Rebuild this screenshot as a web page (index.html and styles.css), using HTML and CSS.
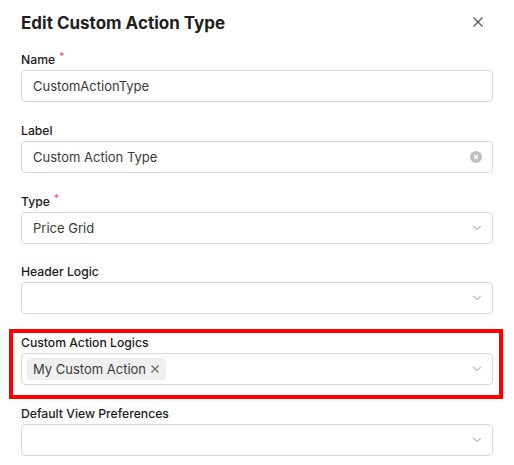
FILE: index.html
```html
<!DOCTYPE html>
<html>
<head>
<meta charset="utf-8">
<link rel="stylesheet" href="styles.css">
</head>
<body>
<div class="modal">
  <div class="header">
    <h1 class="title">Edit Custom Action Type</h1>
    <button class="close" aria-label="Close">
      <svg width="12" height="12" viewBox="0 0 12 12"><path d="M1.5 1.5 L10.5 10.5 M10.5 1.5 L1.5 10.5" stroke="#595959" stroke-width="1.3" fill="none"/></svg>
    </button>
  </div>

  <div class="field">
    <div class="label">Name<span class="req">*</span></div>
    <div class="input"><span class="value">CustomActionType</span></div>
  </div>

  <div class="field">
    <div class="label">Label</div>
    <div class="input"><span class="value">Custom Action Type</span>
      <svg class="suffix" width="12" height="12" viewBox="0 0 12 12"><circle cx="6" cy="6" r="6" fill="#bfbfbf"/><path d="M4 4 L8 8 M8 4 L4 8" stroke="#fff" stroke-width="1.3"/></svg>
    </div>
  </div>

  <div class="field">
    <div class="label">Type<span class="req">*</span></div>
    <div class="input"><span class="value">Price Grid</span>
      <svg class="suffix" width="10" height="6" viewBox="0 0 10 6"><path d="M1 1 L5 4.5 L9 1" stroke="#bfbfbf" stroke-width="1.2" fill="none"/></svg>
    </div>
  </div>

  <div class="field">
    <div class="label">Header Logic</div>
    <div class="input"><span class="value"></span>
      <svg class="suffix" width="10" height="6" viewBox="0 0 10 6"><path d="M1 1 L5 4.5 L9 1" stroke="#bfbfbf" stroke-width="1.2" fill="none"/></svg>
    </div>
  </div>

  <div class="field highlight">
    <div class="label">Custom Action Logics</div>
    <div class="input multi">
      <span class="tag">My Custom Action
        <svg class="tag-x" width="10" height="10" viewBox="0 0 10 10"><path d="M1.5 1.5 L8.5 8.5 M8.5 1.5 L1.5 8.5" stroke="#666" stroke-width="1.1" fill="none"/></svg>
      </span>
      <svg class="suffix" width="10" height="6" viewBox="0 0 10 6"><path d="M1 1 L5 4.5 L9 1" stroke="#bfbfbf" stroke-width="1.2" fill="none"/></svg>
    </div>
  </div>

  <div class="field">
    <div class="label">Default View Preferences</div>
    <div class="input"><span class="value"></span>
      <svg class="suffix" width="10" height="6" viewBox="0 0 10 6"><path d="M1 1 L5 4.5 L9 1" stroke="#bfbfbf" stroke-width="1.2" fill="none"/></svg>
    </div>
  </div>
</div>
</body>
</html>
```

FILE: styles.css
```css
* { box-sizing: border-box; }
html, body { margin: 0; padding: 0; background: #fff; }
body {
  font-family: Inter, "Noto Sans", sans-serif;
  color: #1f1f1f;
  width: 514px;
  height: 465px;
  overflow: hidden;
}
.modal {
  padding: 10.5px 21px 0 21px;
}
.header {
  display: flex;
  align-items: center;
  justify-content: space-between;
  margin-bottom: 15.5px;
}
.title {
  margin: 0;
  font-size: 17px;
  line-height: 24px;
  font-weight: 700;
  color: #1f1f1f;
}
.close {
  border: 0;
  background: none;
  padding: 0;
  margin-right: 9px;
  width: 12px;
  height: 12px;
  display: flex;
  align-items: center;
  justify-content: center;
  margin-top: -1px;
}
.field {
  margin-bottom: 18.8px;
}
.label {
  font-size: 12.2px;
  line-height: 20px;
  font-weight: 500;
  color: #1a1a1a;
}
.req {
  color: #ff4d6d;
  font-size: 10px;
  margin-left: 4px;
  vertical-align: 4px;
  line-height: 0;
}
.input {
  height: 32px;
  border: 1px solid #d9d9d9;
  border-radius: 4px;
  display: flex;
  align-items: center;
  padding: 0 10px 0 11px;
  font-size: 13px;
  color: #3a3a3a;
}
.value { flex: 1; }
.suffix { flex: none; margin-right: 0; }
.input.multi { padding-left: 5px; }
.tag {
  display: inline-flex;
  align-items: center;
  height: 22px;
  padding: 0 5px 0 5px;
  background: #f0f0f0;
  border: 1px solid #ececec;
  border-radius: 4px;
  color: #3a3a3a;
  font-size: 13px;
  margin-right: auto;
}
.tag-x { margin-left: 4px; }
.highlight { position: relative; }
.highlight::after {
  content: "";
  position: absolute;
  left: -12px;
  right: -10px;
  top: -4px;
  bottom: -14px;
  border: 4px solid #ff0000;
  pointer-events: none;
}
```
